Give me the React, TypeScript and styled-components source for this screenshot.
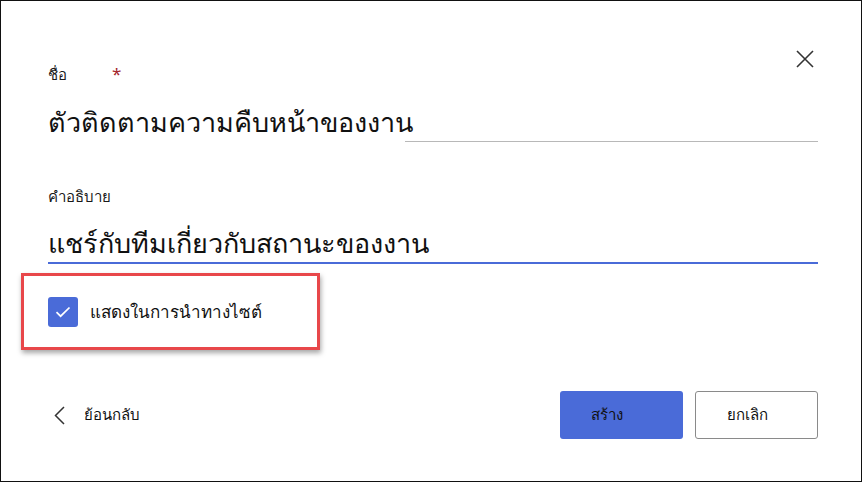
import React from 'react';
import styled, { createGlobalStyle } from 'styled-components';

const GlobalStyle = createGlobalStyle`
    html, body {
        margin: 0;
        padding: 0;
        background: #fff;
    }
    body {
        font-family: "Noto Sans", "Liberation Sans", sans-serif;
        color: #111;
    }
`;

const Dialog = styled.div`
    position: relative;
    box-sizing: border-box;
    width: 862px;
    height: 482px;
    border: 1px solid #111;
    background: #fff;
    padding: 63px 43px 0 47px;
    display: flex;
    flex-direction: column;
`;

const CloseButton = styled.button`
    position: absolute;
    top: 47px;
    right: 45px;
    width: 22px;
    height: 22px;
    padding: 0;
    border: none;
    background: transparent;
    display: flex;
    align-items: center;
    justify-content: center;
    cursor: pointer;
`;

const Field = styled.div<{ $gap?: number }>`
    display: flex;
    flex-direction: column;
    margin-top: ${(p) => p.$gap ?? 0}px;
`;

const Label = styled.label`
    font-size: 15px;
    line-height: 20px;
    color: #1a1a1a;
    height: 20px;
`;

const Required = styled.span`
    color: #a4262c;
    margin-left: 45px;
    font-size: 17px;
`;

const InputLine = styled.div<{ $focused?: boolean }>`
    display: flex;
    align-items: flex-end;
    height: ${(p) => (p.$focused ? '56px' : '57px')};
    border-bottom: ${(p) => (p.$focused ? '2px solid #4a6bd8' : '1px solid #b8b8b8')};
`;

const InputText = styled.span<{ $cover?: boolean }>`
    font-size: 27px;
    line-height: 38px;
    color: #111;
    white-space: nowrap;
    background: #fff;
    margin-bottom: ${(p) => (p.$cover ? '-1px' : '0')};
    padding-bottom: ${(p) => (p.$cover ? '1px' : '0')};
    width: ${(p) => (p.$cover ? '357px' : 'auto')};
`;

const Highlight = styled.div`
    align-self: flex-start;
    box-sizing: border-box;
    width: 299px;
    height: 77px;
    margin: 9px 0 0 -27px;
    border: 3px solid #e8474a;
    box-shadow: 1px 3px 5px rgba(0, 0, 0, 0.35);
    display: flex;
    align-items: center;
    padding-left: 24px;
    gap: 12px;
`;

const CheckBox = styled.span`
    width: 30px;
    height: 30px;
    border-radius: 3px;
    background: #4a6bd8;
    display: flex;
    align-items: center;
    justify-content: center;
`;

const CheckLabel = styled.span`
    font-size: 17px;
    line-height: 24px;
    color: #111;
`;

const Footer = styled.div`
    display: flex;
    align-items: center;
    justify-content: space-between;
    margin-top: 41px;
`;

const BackLink = styled.a`
    display: flex;
    align-items: center;
    gap: 19px;
    padding-left: 6px;
    font-size: 15px;
    color: #111;
    text-decoration: none;
    cursor: pointer;
`;

const Actions = styled.div`
    display: flex;
    gap: 12px;
`;

const Button = styled.button<{ $primary?: boolean }>`
    box-sizing: border-box;
    width: 123px;
    height: 48px;
    border-radius: 3px;
    font-family: inherit;
    font-size: 15px;
    color: #111;
    cursor: pointer;
    padding: ${(p) => (p.$primary ? '0 30px 0 0' : '0 19px 0 0')};
    background: ${(p) => (p.$primary ? '#4a6bd8' : '#fff')};
    border: ${(p) => (p.$primary ? 'none' : '1px solid #8a8a8a')};
`;

function App() {
    return (
        <>
            <GlobalStyle />
            <Dialog>
                <CloseButton aria-label="close">
                    <svg width="18" height="18" viewBox="0 0 18 18">
                        <path d="M1 1 L17 17 M17 1 L1 17" stroke="#333" strokeWidth="1.6" />
                    </svg>
                </CloseButton>

                <Field>
                    <Label>
                        ชื่อ<Required>*</Required>
                    </Label>
                    <InputLine>
                        <InputText $cover>ตัวติดตามความคืบหน้าของงาน</InputText>
                    </InputLine>
                </Field>

                <Field $gap={44}>
                    <Label>คำอธิบาย</Label>
                    <InputLine $focused>
                        <InputText>แชร์กับทีมเกี่ยวกับสถานะของงาน</InputText>
                    </InputLine>
                </Field>

                <Highlight>
                    <CheckBox>
                        <svg width="16" height="12" viewBox="0 0 16 12">
                            <path d="M1.5 6.2 L5.6 10.2 L14.5 1.5" fill="none" stroke="#fff" strokeWidth="1.7" />
                        </svg>
                    </CheckBox>
                    <CheckLabel>แสดงในการนำทางไซต์</CheckLabel>
                </Highlight>

                <Footer>
                    <BackLink>
                        <svg width="11" height="19" viewBox="0 0 11 19">
                            <path d="M10 1 L1.5 9.5 L10 18" fill="none" stroke="#333" strokeWidth="1.5" />
                        </svg>
                        ย้อนกลับ
                    </BackLink>
                    <Actions>
                        <Button $primary>สร้าง</Button>
                        <Button>ยกเลิก</Button>
                    </Actions>
                </Footer>
            </Dialog>
        </>
    );
}

export default App;
